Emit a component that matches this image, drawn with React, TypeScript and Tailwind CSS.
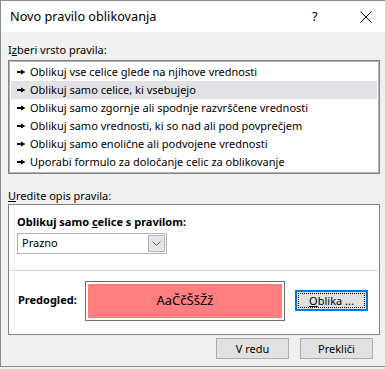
import React from 'react';

// --- DATA ---
const ruleTypes = [
    'Oblikuj vse celice glede na njihove vrednosti',
    'Oblikuj samo celice, ki vsebujejo',
    'Oblikuj samo zgornje ali spodnje razvrščene vrednosti',
    'Oblikuj samo vrednosti, ki so nad ali pod povprečjem',
    'Oblikuj samo enolične ali podvojene vrednosti',
    'Uporabi formulo za določanje celic za oblikovanje',
];

const font = { fontFamily: '"Noto Sans", "Open Sans", sans-serif' };

const RuleArrow = () => (
    <svg width="9" height="6" viewBox="0 0 9 6" className="shrink-0">
        <rect x="0" y="2" width="5" height="2" fill="#000" />
        <polygon points="4,0.5 8.5,3 4,5.5" fill="#000" />
    </svg>
);

const WinButton = ({ children }: any) => (
    <button className="w-[73px] h-[21px] bg-[#e1e1e1] border border-[#adadad] text-[11px] text-black leading-none">
        {children}
    </button>
);

function App() {
    return (
        <div className="w-[385px] h-[369px] bg-[#f0f0f0] text-black" style={font}>
            <div className="h-[367px] border-t border-l border-b border-[#8a8a8a] flex flex-col">
                {/* title bar */}
                <div className="h-[31px] bg-white flex items-center pl-[9px] shrink-0">
                    <span className="text-[12.7px] flex-1">Novo pravilo oblikovanja</span>
                    <span className="text-[13px] w-[10px] mr-[38px]">?</span>
                    <svg width="12" height="12" viewBox="0 0 12 12" className="mr-[13px]">
                        <path d="M0.5 0.5 L11.5 11.5 M11.5 0.5 L0.5 11.5" stroke="#000" strokeWidth="1" />
                    </svg>
                </div>

                <div className="flex-1 px-[7px] pt-[9px] text-[11px]">
                    <div className="h-[18px] leading-[18px]">I<span className="underline">z</span>beri vrsto pravila:</div>

                    {/* rule type list */}
                    <div className="mt-px w-[372px] h-[114px] bg-white border border-[#828282] shadow-[inset_0_0_0_1px_#b4b4b4] p-[2px]">
                        {ruleTypes.map((rule, i) => (
                            <div
                                key={rule}
                                className={`h-[18px] flex items-center gap-[4px] pl-[6px] ${i === 1 ? 'bg-[#e2e2e6]' : ''}`}
                            >
                                <RuleArrow />
                                <span className="whitespace-nowrap">{rule}</span>
                            </div>
                        ))}
                    </div>

                    <div className="mt-[13px] h-[17px] leading-[17px]"><span className="underline">U</span>redite opis pravila:</div>

                    {/* rule description */}
                    <div className="w-[372px] h-[131px] bg-white border border-[#828282] flex flex-col">
                        <div className="pl-[8px] pt-[8px] h-[65px]">
                            <div className="font-bold h-[17px] leading-[17px]">Oblikuj samo <span className="underline">c</span>elice s pravilom:</div>
                            <div className="mt-[3px] w-[150px] h-[21px] border border-[#b4b4b4] flex items-center">
                                <span className="flex-1 pl-[4px]">Prazno</span>
                                <div className="w-[17px] h-[17px] mr-px bg-[#e5e5e5] border border-[#b4b4b4] flex items-center justify-center">
                                    <svg width="9" height="5" viewBox="0 0 9 5">
                                        <path d="M0.5 0.5 L4.5 4.5 L8.5 0.5" stroke="#606060" fill="none" />
                                    </svg>
                                </div>
                            </div>
                        </div>
                        <div className="mx-px h-px bg-[#d4d4d4]" />
                        <div className="flex-1 flex items-center pl-[9px] pb-[4px]">
                            <span className="font-bold w-[67px]">Predogled:</span>
                            <div className="w-[200px] h-[40px] border border-[#6e6e6e] p-[2px]">
                                <div className="w-full h-full bg-[#ff7f7f] flex items-center justify-center text-[13px]">
                                    AaČčŠšŽž
                                </div>
                            </div>
                            <button className="ml-[10px] w-[73px] h-[21px] border-2 border-[#0078d7] bg-[#e1e1e1] p-px">
                                <div className="w-full h-full border border-dotted border-black flex items-center justify-center text-[11px] leading-none">
                                    <span><span className="underline">O</span>blika ...</span>
                                </div>
                            </button>
                        </div>
                    </div>

                    {/* footer */}
                    <div className="mt-[3px] flex justify-end gap-[11px] pr-[5px]">
                        <WinButton>V redu</WinButton>
                        <WinButton>Prekliči</WinButton>
                    </div>
                </div>
            </div>
        </div>
    );
}

export default App;
